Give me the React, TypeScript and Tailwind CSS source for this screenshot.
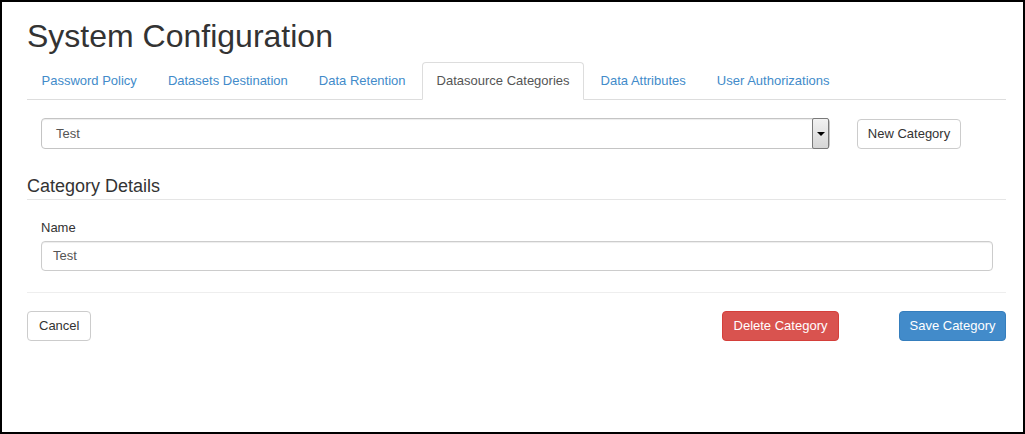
import React from 'react';

const tabs = [
  'Password Policy',
  'Datasets Destination',
  'Data Retention',
  'Datasource Categories',
  'Data Attributes',
  'User Authorizations',
];

const App: React.FC = () => {
  const active = 'Datasource Categories';

  return (
    <div className="w-[1025px] h-[434px] border-2 border-black bg-white pl-[25px] pr-[17px] pt-[17px] font-['Liberation_Sans',Arial,sans-serif] text-[#333]">
      {/* Title */}
      <h1 className="text-[32px] leading-[35px] font-normal">System Configuration</h1>

      {/* Tabs */}
      <ul className="mt-[8px] flex border-b border-[#ddd]">
        {tabs.map((t) => (
          <li key={t} className="-mb-px mr-[2px]">
            <span
              className={
                t === active
                  ? 'block px-[13.5px] py-[9px] text-[13px] leading-[18px] border border-[#ddd] border-b-white rounded-t-[4px] bg-white text-[#555]'
                  : 'block px-[13.5px] py-[9px] text-[13px] leading-[18px] border border-transparent text-[#428bca]'
              }
            >
              {t}
            </span>
          </li>
        ))}
      </ul>

      {/* Category select */}
      <div className="mt-[18px] pl-[14px] flex items-center">
        <div className="w-[789px] h-[31px] flex items-stretch border border-[#c4c4c4] rounded-[4px] shadow-[inset_0_1px_1px_rgba(0,0,0,0.075)]">
          <div className="flex-1 flex items-center pl-[14px] text-[13px] text-[#555]">Test</div>
          <div className="w-[17px] my-[-1px] flex items-center justify-center border border-[#7a7a7a] rounded-[2px] bg-gradient-to-b from-[#f2f2f2] to-[#d6d6d6]">
            <span className="block w-0 h-0 border-l-[4px] border-r-[4px] border-t-[4px] border-l-transparent border-r-transparent border-t-black" />
          </div>
        </div>
        <button className="ml-[27px] w-[104px] h-[30px] flex items-center justify-center border border-[#ccc] rounded-[4px] bg-white text-[13px] text-[#333]">
          New Category
        </button>
      </div>

      {/* Category details */}
      <h2 className="mt-[27px] text-[18px] leading-[20px] font-normal pb-[3px] border-b border-[#e5e5e5]">
        Category Details
      </h2>

      <div className="mt-[19px] pl-[14px] pr-[13px]">
        <label className="block text-[13px] leading-[18px]">Name</label>
        <div className="mt-[4px] h-[30px] flex items-center pl-[11px] border border-[#ccc] rounded-[4px] shadow-[inset_0_1px_1px_rgba(0,0,0,0.075)] text-[13px] text-[#555]">
          Test
        </div>
      </div>

      <div className="mt-[21px] border-t border-[#eee]" />

      {/* Actions */}
      <div className="mt-[18px] flex justify-between items-center">
        <button className="h-[30px] px-[11px] border border-[#ccc] rounded-[4px] bg-white text-[13px] text-[#333]">
          Cancel
        </button>
        <div className="flex items-center gap-[60px]">
          <button className="w-[117px] h-[30px] flex items-center justify-center border border-[#d43f3a] rounded-[4px] bg-[#d9534f] text-[13px] text-white">
            Delete Category
          </button>
          <button className="w-[107px] h-[30px] flex items-center justify-center border border-[#357ebd] rounded-[4px] bg-[#428bca] text-[13px] text-white">
            Save Category
          </button>
        </div>
      </div>
    </div>
  );
};

export default App;
